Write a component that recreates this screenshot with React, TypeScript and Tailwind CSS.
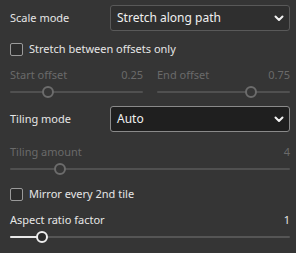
import React from "react";

function Chevron() {
  return (
    <svg width="10" height="7" viewBox="0 0 10 7" className="shrink-0">
      <polyline points="1.5,1.5 5,5 8.5,1.5" fill="none" stroke="#f2f2f2" strokeWidth="2" strokeLinecap="round" strokeLinejoin="round" />
    </svg>
  );
}

function Select({ value, focused }: { value: string; focused?: boolean }) {
  return (
    <div
      className={`flex-1 h-[26px] flex items-center justify-between pl-[6px] pr-[5px] rounded-[3px] border ${
        focused ? "bg-[#1f1f1f] border-[#8a8a8a]" : "bg-[#2f2f2f] border-[#595959]"
      }`}
    >
      <span className="text-[12px] text-[#f0f0f0]">{value}</span>
      <Chevron />
    </div>
  );
}

function Checkbox({ label }: { label: string }) {
  return (
    <div className="flex items-center gap-[6px] h-[22px]">
      <div className="w-[13px] h-[13px] border border-[#9a9a9a] rounded-[2px] bg-[#2c2c2c]" />
      <span className="text-[#e6e6e6]">{label}</span>
    </div>
  );
}

function Slider({ pos, disabled, filled }: { pos: number; disabled?: boolean; filled?: boolean }) {
  return (
    <div className="relative h-[16px] flex items-center">
      <div className={`w-full h-[2px] rounded-full ${disabled ? "bg-[#505050]" : "bg-[#555555]"}`} />
      {filled && <div className="absolute left-0 h-[2px] bg-[#e8e8e8] rounded-full" style={{ width: `${pos}px` }} />}
      <div
        className={`absolute w-[12px] h-[12px] rounded-full border-2 -translate-x-1/2 ${
          disabled ? "border-[#6c6c6c] bg-[#363636]" : "border-[#ededed] bg-[#2a2a2a]"
        }`}
        style={{ left: `${pos}px` }}
      />
    </div>
  );
}

export default function App() {
  return (
    <div className="w-[296px] h-[253px] overflow-hidden bg-[#353535] font-['Noto_Sans',sans-serif] text-[11px] pl-[10px] pr-[6px] pt-[5px] flex flex-col">
      {/* Scale mode */}
      <div className="flex items-center h-[26px]">
        <span className="w-[100px] text-[#e6e6e6]">Scale mode</span>
        <Select value="Stretch along path" />
      </div>

      <div className="mt-[7px]">
        <Checkbox label="Stretch between offsets only" />
      </div>

      {/* Offsets */}
      <div className="grid grid-cols-2 gap-x-[14px] mt-[7px]">
        <div>
          <div className="flex justify-between h-[16px] items-center text-[#6a6a6a]">
            <span>Start offset</span>
            <span>0.25</span>
          </div>
          <div className="mt-[1px]">
            <Slider pos={38} disabled />
          </div>
        </div>
        <div>
          <div className="flex justify-between h-[16px] items-center text-[#6a6a6a]">
            <span>End offset</span>
            <span>0.75</span>
          </div>
          <div className="mt-[1px]">
            <Slider pos={94} disabled />
          </div>
        </div>
      </div>

      {/* Tiling mode */}
      <div className="flex items-center h-[26px] mt-[6px]">
        <span className="w-[100px] text-[#e6e6e6]">Tiling mode</span>
        <Select value="Auto" focused />
      </div>

      <div className="flex justify-between h-[16px] items-center text-[#6a6a6a] mt-[12px]">
        <span>Tiling amount</span>
        <span>4</span>
      </div>
      <div className="mt-[1px]">
        <Slider pos={50} disabled />
      </div>

      <div className="mt-[6px]">
        <Checkbox label="Mirror every 2nd tile" />
      </div>

      <div className="flex justify-between h-[16px] items-center text-[#e6e6e6] mt-[7px]">
        <span>Aspect ratio factor</span>
        <span>1</span>
      </div>
      <div className="mt-[1px]">
        <Slider pos={32} filled />
      </div>
    </div>
  );
}
